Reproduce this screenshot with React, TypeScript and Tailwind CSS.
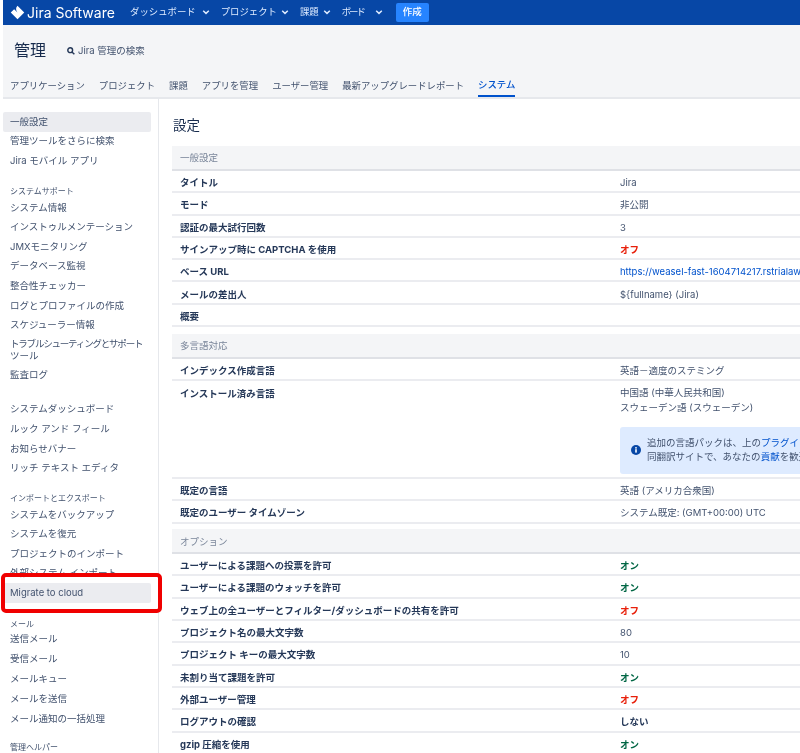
import React from "react";

const font = { fontFamily: '"Inter","Noto Sans CJK JP",sans-serif' };

function Chevron() {
  return (
    <svg width="8" height="8" viewBox="0 0 8 8" fill="none" stroke="currentColor" strokeWidth="1.5">
      <path d="M1.2 2.8 4 5.4l2.8-2.6" />
    </svg>
  );
}

function NavItem({ label, gap }: { label: string; gap: string }) {
  return (
    <div className={`flex items-center text-[9.4px] text-[#deebff] ${gap}`}>
      <span>{label}</span>
      <Chevron />
    </div>
  );
}

function SideItem({ label, active, h = "h-[19.6px]" }: { label: string; active?: boolean; h?: string }) {
  return (
    <div className={`${h} flex items-center px-[7px] text-[9.5px] leading-[14px] text-[#42526e] rounded-[2px] ${active ? "bg-[#ebecf0]" : ""}`}>
      {label}
    </div>
  );
}

function SideHead({ label, cls }: { label: string; cls: string }) {
  return <div className={`px-[7px] text-[8px] leading-[10px] text-[#42526e] ${cls}`}>{label}</div>;
}

type RowProps = { k: string; v?: React.ReactNode; c?: string };

function Row({ k, v, c }: RowProps) {
  return (
    <div className="h-[22.3px] flex items-center pt-[4px] border-b-2 border-[#ebecf0] text-[9.5px]">
      <div className="w-[448px] pl-[8px] font-bold text-[#253858] whitespace-nowrap">{k}</div>
      <div className={`whitespace-nowrap ${c ?? "text-[#42526e]"}`}>{v}</div>
    </div>
  );
}

function Head({ label, cls }: { label: string; cls?: string }) {
  return (
    <div className={`h-[25px] flex items-center pl-[8px] pt-[2px] bg-[#f4f5f7] border-b-2 border-[#dfe1e6] text-[9.5px] text-[#7a869a] ${cls ?? ""}`}>
      {label}
    </div>
  );
}

const on = "font-bold text-[#006644]";
const off = "font-bold text-[#e8200b]";

export default function App() {
  return (
    <div className="relative w-[800px] h-[753px] overflow-hidden bg-white pl-[3px] blur-[0.35px]" style={font}>
      <header className="h-[25px] bg-[#0747a6] flex items-center text-white">
        <div className="flex items-center w-[127px] pl-[7px] gap-[2px]">
          <svg width="15" height="15" viewBox="0 0 16 16" fill="white">
            <path d="M8 .8 15.2 8 8 15.2.8 8 4.4 4.4 8 8l0-.1a4.9 4.9 0 0 1 0-7.1z" />
          </svg>
          <span className="text-[14px] whitespace-nowrap">Jira Software</span>
        </div>
        <NavItem label="ダッシュボード" gap="gap-[6px] mr-[11px]" />
        <NavItem label="プロジェクト" gap="gap-[4px] mr-[11px]" />
        <NavItem label="課題" gap="gap-[4px] mr-[11px]" />
        <NavItem label="ボード" gap="gap-[11px] tracking-[-2px]" />
        <div className="ml-[13px] w-[33px] h-[19px] rounded-[2px] bg-[#2684ff] flex items-center justify-center text-[9.5px] font-medium">
          作成
        </div>
      </header>

      <div className="h-[74px] bg-[#f4f5f7] border-b-2 border-[#e6e8ec] flex flex-col">
        <div className="h-[49px] flex items-center pl-[11px] pt-[2px]">
          <span className="text-[16px] text-[#172b4d] w-[53px]">管理</span>
          <div className="flex items-center mt-[3px]">
            <svg width="8" height="8" viewBox="0 0 10 10" fill="none" stroke="#253858" strokeWidth="1.8">
              <circle cx="4" cy="4" r="3" />
              <path d="m6.2 6.2 3 3" />
            </svg>
            <span className="ml-[3px] text-[9.5px] text-[#42526e]">Jira 管理の検索</span>
          </div>
        </div>
        <div className="flex-1 flex items-start pl-[7px] gap-[14px] text-[9.4px] text-[#42526e]">
          <span className="h-[25px] pt-[4px] flex items-center">アプリケーション</span>
          <span className="h-[25px] pt-[4px] flex items-center">プロジェクト</span>
          <span className="h-[25px] pt-[4px] flex items-center">課題</span>
          <span className="h-[25px] pt-[4px] flex items-center">アプリを管理</span>
          <span className="h-[25px] pt-[4px] flex items-center">ユーザー管理</span>
          <span className="h-[25px] pt-[4px] flex items-center">最新アップグレードレポート</span>
          <span className="h-[25px] pt-[4px] flex items-center font-medium text-[#0052cc] border-b-2 border-[#0052cc]">システム</span>
        </div>
      </div>

      <div className="flex">
        <aside className="w-[156px] shrink-0 h-[660px] border-r border-[#e6e8ec] pr-[7px] pt-[13px]">
          <SideItem label="一般設定" active />
          <SideItem label="管理ツールをさらに検索" />
          <SideItem label="Jira モバイル アプリ" />
          <SideHead label="システムサポート" cls="mt-[15px] mb-[2px]" />
          <SideItem label="システム情報" />
          <SideItem label="インストゥルメンテーション" />
          <SideItem label="JMXモニタリング" />
          <SideItem label="データベース監視" />
          <SideItem label="整合性チェッカー" />
          <SideItem label="ログとプロファイルの作成" />
          <SideItem label="スケジューラー情報" />
          <div className="h-[30px] flex flex-col justify-center px-[7px] text-[9.5px] leading-[12px] text-[#42526e]">
            <span className="whitespace-nowrap tracking-[-1.2px]">トラブルシューティングとサポート</span>
            <span>ツール</span>
          </div>
          <SideItem label="監査ログ" />
          <div className="h-[15px]" />
          <SideItem label="システムダッシュボード" />
          <SideItem label="ルック アンド フィール" />
          <SideItem label="お知らせバナー" />
          <SideItem label="リッチ テキスト エディタ" />
          <SideHead label="インポートとエクスポート" cls="mt-[15px] mb-[2px]" />
          <SideItem label="システムをバックアップ" />
          <SideItem label="システムを復元" />
          <SideItem label="プロジェクトのインポート" />
          <SideItem label="外部システム インポート" />
          <SideItem label="Migrate to cloud" active />
          <SideHead label="メール" cls="mt-[16px]" />
          <SideItem label="送信メール" h="h-[20px]" />
          <SideItem label="受信メール" h="h-[20px]" />
          <SideItem label="メールキュー" h="h-[20px]" />
          <SideItem label="メールを送信" h="h-[20px]" />
          <SideItem label="メール通知の一括処理" h="h-[20px]" />
          <SideHead label="管理ヘルパー" cls="mt-[13px]" />
        </aside>

        <main className="flex-1 pl-[13px]">
          <h1 className="h-[47px] pt-[16px] pl-[1px] text-[13.5px] leading-[20px] text-[#172b4d]">設定</h1>
          <Head label="一般設定" />
          <Row k="タイトル" v="Jira" />
          <Row k="モード" v="非公開" />
          <Row k="認証の最大試行回数" v="3" />
          <Row k="サインアップ時に CAPTCHA を使用" v="オフ" c={off} />
          <Row k="ベース URL" v="https://weasel-fast-1604714217.rstrialaws.com" c="text-[#0052cc]" />
          <Row k="メールの差出人" v="${fullname} (Jira)" />
          <Row k="概要" />
          <Head label="多言語対応" cls="mt-[7px]" />
          <Row k="インデックス作成言語" v="英語－適度のステミング" />
          <div className="h-[97.7px] flex items-start border-b-2 border-[#ebecf0] text-[9.5px]">
            <div className="w-[448px] pl-[8px] pt-[6px] font-bold text-[#253858]">インストール済み言語</div>
            <div className="text-[#42526e] flex-1 min-w-0 pt-[4.5px] leading-[14.7px] whitespace-nowrap">
              <div>中国語 (中華人民共和国)</div>
              <div>スウェーデン語 (スウェーデン)</div>
              <div className="mt-[11.7px] h-[47px] bg-[#deebff] rounded-l-[3px] flex items-center pl-[11px] gap-[6px] overflow-hidden">
                <svg width="10" height="10" viewBox="0 0 10 10" className="shrink-0">
                  <circle cx="5" cy="5" r="5" fill="#0747a6" />
                  <rect x="4.2" y="4.2" width="1.6" height="3.4" fill="white" />
                  <circle cx="5" cy="2.8" r="0.9" fill="white" />
                </svg>
                <div className="leading-[14px]">
                  <div>追加の言語パックは、上の<span className="text-[#0052cc]">プラグイン</span></div>
                  <div>同翻訳サイトで、あなたの<span className="text-[#0052cc]">貢献</span>を歓迎</div>
                </div>
              </div>
            </div>
          </div>
          <Row k="既定の言語" v="英語 (アメリカ合衆国)" />
          <Row k="既定のユーザー タイムゾーン" v="システム既定: (GMT+00:00) UTC" />
          <Head label="オプション" cls="mt-[5.5px]" />
          <Row k="ユーザーによる課題への投票を許可" v="オン" c={on} />
          <Row k="ユーザーによる課題のウォッチを許可" v="オン" c={on} />
          <Row k="ウェブ上の全ユーザーとフィルター/ダッシュボードの共有を許可" v="オフ" c={off} />
          <Row k="プロジェクト名の最大文字数" v="80" />
          <Row k="プロジェクト キーの最大文字数" v="10" />
          <Row k="未割り当て課題を許可" v="オン" c={on} />
          <Row k="外部ユーザー管理" v="オフ" c={off} />
          <Row k="ログアウトの確認" v="しない" c="font-bold text-[#253858]" />
          <Row k="gzip 圧縮を使用" v="オン" c={on} />
        </main>
      </div>

      <div className="absolute left-[1px] top-[573px] w-[161px] h-[40px] rounded-[5px] border-[4px] border-[#f00000]" />
    </div>
  );
}
